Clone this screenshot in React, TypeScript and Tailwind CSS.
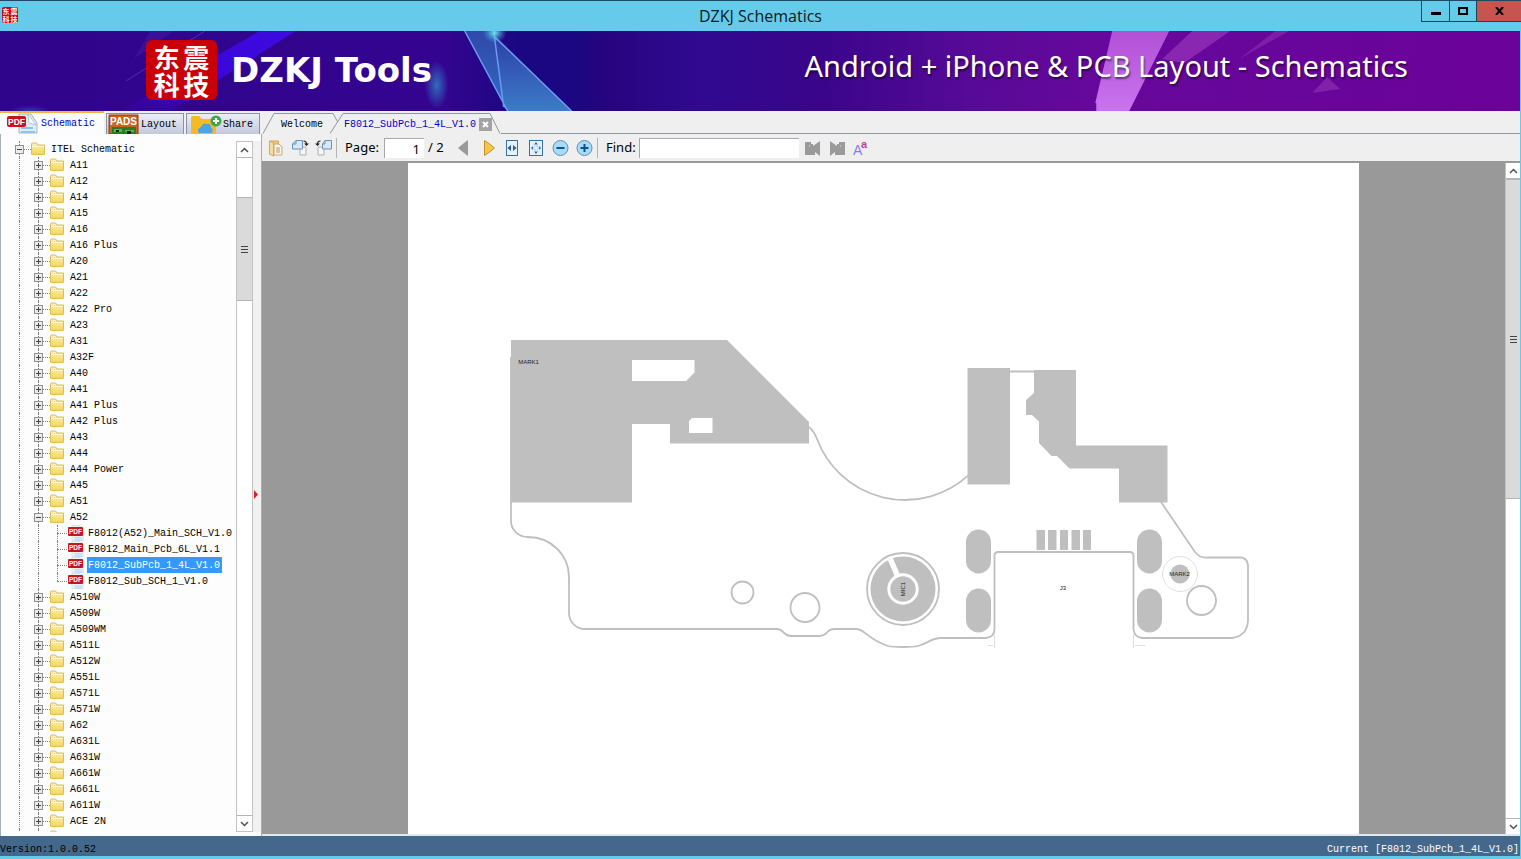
import { ReactNode } from "react";

type NodeItem = {
    label: string;
    level: 0 | 1 | 2;
    open?: boolean;
    last?: boolean;
    selected?: boolean;
};

const before = [
    "A11", "A12", "A14", "A15", "A16", "A16 Plus", "A20", "A21", "A22", "A22 Pro", "A23", "A31",
    "A32F", "A40", "A41", "A41 Plus", "A42 Plus", "A43", "A44", "A44 Power", "A45", "A51",
];

const after = [
    "A510W", "A509W", "A509WM", "A511L", "A512W", "A551L", "A571L", "A571W", "A62", "A631L",
    "A631W", "A661W", "A661L", "A611W", "ACE 2N", "",
];

const nodes: NodeItem[] = [
    { label: "ITEL Schematic", level: 0, open: true },
    ...before.map((label) => ({ label, level: 1 as const })),
    { label: "A52", level: 1, open: true },
    { label: "F8012(A52)_Main_SCH_V1.0", level: 2 },
    { label: "F8012_Main_Pcb_6L_V1.1", level: 2 },
    { label: "F8012_SubPcb_1_4L_V1.0", level: 2, selected: true },
    { label: "F8012_Sub_SCH_1_V1.0", level: 2, last: true },
    ...after.map((label) => ({ label, level: 1 as const })),
];

const mono = "font-['Liberation_Mono',monospace] text-[10px]";

const FolderIcon = () => (
    <svg width="16" height="14" viewBox="0 0 16 14" className="shrink-0">
        <defs>
            <linearGradient id="folder" x1="0" y1="0" x2="0" y2="1">
                <stop offset="0" stopColor="#fff3b4" />
                <stop offset="1" stopColor="#f3d267" />
            </linearGradient>
        </defs>
        <path d="M1.5 12V2q0-1 1-1h4L8 3h6.500v9q0 .5-.5.5H2q-.5 0-.5-.5z" fill="url(#folder)" stroke="#e0bd55" />
        <path d="M2 4.500h12" stroke="#fff8d0" />
    </svg>
);

const PdfIcon = () => (
    <svg width="16" height="16" viewBox="0 0 16 16" className="shrink-0">
        <path d="M4 .5h8l3 3V16H4z" fill="#eef6fb" stroke="#b9d3e2" strokeWidth=".6" />
        <path d="M6 13h8M7 15h7" stroke="#a8d0ea" />
        <rect x="0" y="2" width="15" height="9" rx="1" fill="#c4161c" />
        <text x="7.500" y="9" fontSize="6.500" fontWeight="700" textAnchor="middle" fill="#fff" fontFamily="Liberation Sans">PDF</text>
    </svg>
);

const Expander = ({ open, label }: { open?: boolean; label: string }) => (
    <button aria-label={label} className="relative block size-[9px] border border-[#919191] bg-[#ececec]">
        <svg width="7" height="7" viewBox="0 0 7 7" stroke="#444" className="block">
            <path d={open ? "M1 3.500h5" : "M1 3.500h5M3.500 1v5"} />
        </svg>
    </button>
);

const Guide = ({ half, across, children }: { half?: boolean; across?: boolean; children?: ReactNode }) => (
    <span className="relative flex h-4 w-[19px] shrink-0 items-center justify-center">
        <span className={`absolute left-[9px] top-0 border-l border-dotted border-[#808080] ${half ? "h-2" : "h-4"}`} />
        {across && <span className="absolute left-[9px] top-2 w-3 border-t border-dotted border-[#808080]" />}
        {children}
    </span>
);

const TreeRow = ({ item }: { item: NodeItem }) => (
    <li className="flex h-4 items-center">
        <Guide across={item.level === 0}>
            {item.level === 0 && <Expander open={item.open} label={item.label} />}
        </Guide>
        {item.level > 0 && (
            <Guide across={item.level === 1}>
                {item.level === 1 && <Expander open={item.open} label={item.label || "More"} />}
            </Guide>
        )}
        {item.level === 2 && <Guide across half={item.last} />}
        <span className="flex w-5 shrink-0 pl-px">{item.level === 2 ? <PdfIcon /> : <FolderIcon />}</span>
        <span
            className={`h-4 whitespace-nowrap border border-dotted leading-4 ${item.level === 2 ? "pr-px" : "pl-px"} ${
                item.selected ? "border-[#c87a20] bg-[#3399ff] text-white" : "border-transparent"
            }`}
        >
            {item.label}
        </span>
    </li>
);

const ScrollBar = ({ before, thumb, className }: { before: string; thumb: string; className: string }) => (
    <div className={`flex shrink-0 flex-col border-[#c3c3c3] bg-white ${className}`}>
        <button aria-label="Scroll up" className="flex h-4 shrink-0 items-center justify-center border-b border-[#b5b5b5]">
            <svg width="9" height="6" viewBox="0 0 9 6" fill="none" stroke="#505050" strokeWidth="1.500"><path d="M1 5l3.500-3.500L8 5" /></svg>
        </button>
        <div className={before} />
        <div className={`flex shrink-0 flex-col items-center justify-center gap-0.5 border-y border-[#b5b5b5] bg-[#dadada] ${thumb}`}>
            <span className="h-px w-[7px] bg-[#444]" />
            <span className="h-px w-[7px] bg-[#444]" />
            <span className="h-px w-[7px] bg-[#444]" />
        </div>
        <div className="flex-1" />
        <button aria-label="Scroll down" className="flex h-4 shrink-0 items-center justify-center border-t border-[#b5b5b5]">
            <svg width="9" height="6" viewBox="0 0 9 6" fill="none" stroke="#505050" strokeWidth="1.500"><path d="M1 1l3.500 3.500L8 1" /></svg>
        </button>
    </div>
);

const TitleBar = () => (
    <header className="relative flex h-[31px] shrink-0 items-center justify-center border-t border-[#1d4a63] bg-[#66cbea] pb-px">
        <span className="absolute left-0.5 top-1.5 grid size-4 grid-cols-2 place-items-center rounded-xs bg-[#c8000a] font-['Noto_Sans_CJK_SC',sans-serif] text-[7px] font-bold leading-[7px] text-white">
            <i className="not-italic">东</i><i className="not-italic">震</i><i className="not-italic">科</i><i className="not-italic">技</i>
        </span>
        <h1 className="font-['Open_Sans',sans-serif] text-base leading-5 text-[#0a1a22]">DZKJ Schematics</h1>
        <div className="absolute right-0 top-0 flex h-[21px] border-b border-l border-[#1f4252]">
            <button aria-label="Minimize" className="flex w-7 items-center justify-center border-r border-[#1f4252]">
                <svg width="10" height="10"><path d="M0 6h10v3H0z" /></svg>
            </button>
            <button aria-label="Maximize" className="flex w-[27px] items-center justify-center border-r border-[#1f4252]">
                <svg width="10" height="8"><path d="M1 1h8v6H1z" fill="none" stroke="#000" strokeWidth="2" /></svg>
            </button>
            <button aria-label="Close" className="flex w-11 items-center justify-center bg-[#c5554e]">
                <svg width="9" height="8" viewBox="0 0 9 8" stroke="#000" strokeWidth="2"><path d="M1 0l7 8M8 0L1 8" /></svg>
            </button>
        </div>
    </header>
);

const BannerArt = () => (
    <svg className="absolute inset-0 size-full" viewBox="0 0 1521 80" preserveAspectRatio="none">
        <defs>
            <linearGradient id="base">
                <stop offset="0" stopColor="#2f058b" />
                <stop offset=".29" stopColor="#340490" />
                <stop offset=".34" stopColor="#1c0782" />
                <stop offset=".38" stopColor="#1c0782" />
                <stop offset=".4" stopColor="#28047f" />
                <stop offset=".46" stopColor="#300990" />
                <stop offset=".54" stopColor="#3a058a" />
                <stop offset=".64" stopColor="#570a97" />
                <stop offset=".72" stopColor="#66089b" />
                <stop offset="1" stopColor="#6b0299" />
            </linearGradient>
            <linearGradient id="beam" x1="1" y1="0" x2="0" y2="1">
                <stop offset="0" stopColor="#3f0ae0" />
                <stop offset=".5" stopColor="#3b06d8" />
                <stop offset="1" stopColor="#3a04b0" stopOpacity=".3" />
            </linearGradient>
            <linearGradient id="shard" x1="0" y1="0" x2="0" y2="1">
                <stop offset="0" stopColor="#3358b4" />
                <stop offset="1" stopColor="#3684cf" />
            </linearGradient>
            <linearGradient id="facet" x1="0" y1="0" x2="0" y2="1">
                <stop offset="0" stopColor="#2c3ca6" />
                <stop offset="1" stopColor="#3c7cc8" />
            </linearGradient>
            <linearGradient id="pink" x1="0" y1="0" x2="0" y2="1">
                <stop offset="0" stopColor="#b350d6" />
                <stop offset="1" stopColor="#c874f0" />
            </linearGradient>
            <radialGradient id="glow">
                <stop offset="0" stopColor="#2f86c8" stopOpacity=".8" />
                <stop offset="1" stopColor="#2f86c8" stopOpacity="0" />
            </radialGradient>
            <radialGradient id="spark">
                <stop offset="0" stopColor="#6ee6f0" />
                <stop offset="1" stopColor="#3aa0d0" stopOpacity="0" />
            </radialGradient>
        </defs>
        <path fill="url(#base)" d="M0 0h1521v80H0z" />
        <path fill="url(#beam)" d="M260 0h36L170 80h-50z" />
        <path d="M205 0L126 50" stroke="#5a4bc8" opacity=".6" />
        <path d="M150 0h24L134 28z" fill="#4b1ea8" opacity=".4" />
        <ellipse cx="30" cy="80" rx="20" ry="6" fill="url(#glow)" opacity=".5" />
        <ellipse cx="437" cy="54" rx="12" ry="24" fill="url(#glow)" />
        <path d="M465 0h29l10 70 4 10z" fill="url(#shard)" opacity=".8" />
        <path d="M494 3l10 73 4 4h64z" fill="url(#facet)" />
        <path d="M465 0l43 80M494 0l10 76M495 6l77 74" stroke="#6a9bf0" strokeWidth="1.500" fill="none" />
        <ellipse cx="495" cy="2" rx="12" ry="10" fill="url(#spark)" />
        <path d="M1113 0h57l-40 80h-33v-8h-1z" fill="url(#pink)" />
        <path d="M1193 0h38l-46 32-22-4z" fill="#9430b8" opacity=".8" />
        <path d="M1276 0h14l-50 28z" fill="#862aae" opacity=".7" />
        <path d="M1328 46l13 12-28 4z" fill="#9440b8" opacity=".5" />
    </svg>
);

const Banner = () => (
    <div className="relative flex h-20 shrink-0 items-center justify-between overflow-hidden pb-0.5 pl-[146px] pr-28 text-white">
        <BannerArt />
        <div className="relative flex items-center gap-3.5">
            <div className="grid h-[60px] w-[71px] grid-cols-2 place-items-center rounded-md bg-[#c90008] px-1.5 py-[3px] font-['Noto_Sans_CJK_SC',sans-serif] text-[26px] font-bold leading-[27px]">
                <span>东</span><span>震</span><span>科</span><span>技</span>
            </div>
            <span className="font-['DejaVu_Sans',sans-serif] text-[34px] font-bold leading-10">DZKJ Tools</span>
        </div>
        <span className="relative pb-2 font-['Noto_Sans',sans-serif] text-[29px] leading-10 [text-shadow:1px_2px_2px_#0008]">
            Android + iPhone &amp; PCB Layout - Schematics
        </span>
    </div>
);

const sideTab = "flex h-[21px] items-center overflow-hidden border border-b-0 border-[#8a93a5] bg-linear-to-b from-[#eceef6] to-[#c3c8dd]";

const SideTabs = () => (
    <div role="tablist" className={`flex items-end gap-0.5 ${mono}`}>
        <button role="tab" aria-selected="true" className="flex h-[23px] w-[104px] items-center border-t-2 border-[#f5b142] bg-[#fcfcfe] pl-1.5 text-[#0000c8]">
            <svg width="34" height="21" viewBox="0 0 34 21" className="mr-px shrink-0">
                <path d="M13 20V1h12l6 9v10z" fill="#dcecf8" stroke="#a6b4bf" />
                <path d="M22 1l8 11-7-2z" fill="#fff" stroke="#a6b4bf" strokeWidth=".7" />
                <path d="M15 15h12M15 19h14" stroke="#8fc4ea" strokeWidth="2" />
                <rect x="1" y="3" width="19" height="11" rx="2" fill="#c4151c" />
                <text x="10.500" y="12" fontSize="8.500" fontWeight="700" textAnchor="middle" fill="#fff" fontFamily="Liberation Sans">PDF</text>
            </svg>
            Schematic
        </button>
        <button role="tab" aria-selected="false" className={`${sideTab} w-[78px]`}>
            <svg width="34" height="20" viewBox="0 0 34 20" className="shrink-0">
                <path d="M2 1h29v19H2z" fill="#c8641e" stroke="#8a3c10" />
                <path d="M5 13h24v7H5z" fill="#2c7a28" />
                <path d="M7 15h8v3H7zM18 16h9v2h-9z" fill="#52b848" />
                <path d="M9 16h3v2H9zM20 17h4v3h-4z" fill="#222" />
                <text x="16.500" y="11" fontSize="10" fontWeight="700" textAnchor="middle" fill="#fff" fontFamily="Liberation Sans">PADS</text>
            </svg>
            Layout
        </button>
        <button role="tab" aria-selected="false" className={`${sideTab} w-[74px] pl-[3px]`}>
            <svg width="33" height="20" viewBox="0 0 33 20" className="shrink-0">
                <path d="M1 20V4q0-2 2-2h6l3 3h12q2 0 2 2v13z" fill="#f5bb24" />
                <path d="M9 19q-3-4 2-6 2-5 6-3 4-1 4 4 3 1 1 5z" fill="#4ba4ea" />
                <circle cx="26" cy="7" r="5.500" fill="#42a845" />
                <path d="M26 4v6M23 7h6" stroke="#fff" strokeWidth="2" />
            </svg>
            Share
        </button>
    </div>
);

const SidePanel = () => (
    <aside className="flex w-[262px] shrink-0 flex-col">
        <SideTabs />
        <div className={`flex min-h-0 flex-1 border-x border-[#a3b1b8] bg-[#fdfdfd] pb-1 pt-[7px] ${mono}`}>
            <ul className="min-w-0 flex-1 overflow-hidden pl-[9px]">
                {nodes.map((item, i) => (
                    <TreeRow key={i} item={item} />
                ))}
            </ul>
            <ScrollBar before="h-[39px] shrink-0" thumb="h-[104px]" className="w-[17px] border" />
            <div className="flex w-2 items-center bg-[#f1f1f4] pt-4">
                <svg width="6" height="9" viewBox="0 0 6 9"><path d="M1 0l4 4.500L1 9z" fill="#d8232a" /></svg>
            </div>
        </div>
    </aside>
);

const DocTabs = () => (
    <div role="tablist" className={`flex h-[23px] shrink-0 items-end ${mono}`}>
        <button role="tab" aria-selected="false" className="relative flex h-[21px] w-[68px] shrink-0 items-center pl-[19px]">
            <svg width="76" height="21" className="absolute left-0 top-0" fill="none" stroke="#8b999d">
                <path d="M1 20.500L12 .5h59l5 9" />
            </svg>
            <span className="relative pt-px">Welcome</span>
        </button>
        <div className="relative flex h-[21px] w-[171px] shrink-0 items-center gap-[3px] pl-3.5 pt-px text-[#0000c8]">
            <svg width="171" height="21" className="absolute left-0 top-0" fill="none" stroke="#8b999d">
                <path d="M0 20.500L13 .5h147l10 20" />
            </svg>
            <button role="tab" aria-selected="true" className="relative">F8012_SubPcb_1_4L_V1.0</button>
            <button aria-label="Close tab" className="relative flex size-[13px] items-center justify-center bg-[#a3a3a3]">
                <svg width="7" height="7" stroke="#fff" strokeWidth="2"><path d="M1 1l5 5M6 1L1 6" /></svg>
            </button>
        </div>
        <div className="h-full flex-1 border-b border-[#8b999d]" />
    </div>
);

const Tool = ({ label, children }: { label: string; children: ReactNode }) => (
    <button aria-label={label} title={label} className="flex w-6 shrink-0 items-center justify-center">
        <svg width="18" height="18" viewBox="0 0 18 18" fill="none">{children}</svg>
    </button>
);

const Toolbar = () => (
    <div className="flex h-[29px] shrink-0 items-center border-b-2 border-[#999] pl-0.5 pt-px font-['Noto_Sans',sans-serif] text-[13px] text-black">
        <Tool label="Open">
            <path d="M2.500 2h9v13h-9z" fill="#f0c878" stroke="#d5a75a" />
            <path d="M2.500 2l4 2v13l-4-2z" fill="#f7dc9c" stroke="#d5a75a" />
            <path d="M7 5h5l3 3v8H7z" fill="#fdf4e4" stroke="#c8a878" />
            <path d="M9 9h4M9 11h4M9 13h4" stroke="#b0977a" />
        </Tool>
        <Tool label="Rotate right">
            <path d="M9 8h6v8H9z" fill="#f6f6f6" stroke="#b0b0b0" />
            <path d="M5 1.500h6.500v8.500H1.500V5z" fill="#d5e9fa" stroke="#6a8fb8" />
            <path d="M1.500 5H5V1.500" stroke="#6a8fb8" />
            <path d="M12.500 2q3 0 3 3" stroke="#222" strokeWidth="1.200" />
            <path d="M13 4.500h5L15.500 7z" fill="#222" />
        </Tool>
        <Tool label="Rotate left">
            <path d="M3 8h6v8H3z" fill="#f6f6f6" stroke="#b0b0b0" />
            <path d="M10 1.500h6.500V10h-9V5z" fill="#d5e9fa" stroke="#6a8fb8" />
            <path d="M7.500 5H10V1.500" stroke="#6a8fb8" />
            <path d="M5.500 2q-3 0-3 3" stroke="#222" strokeWidth="1.200" />
            <path d="M0 4.500h5L2.500 7z" fill="#222" />
        </Tool>
        <span className="h-5 w-px bg-[#b4b4b4]" />
        <label htmlFor="page" className="ml-2 w-[39px]">Page:</label>
        <input id="page" defaultValue="1" className="h-5 w-10 border-l border-t border-[#a8a8a8] bg-white pr-1 text-right" />
        <span className="ml-1 w-[19px] whitespace-nowrap">/ 2</span>
        <span className="w-1" />
        <Tool label="Previous page">
            <path d="M14 1v16q-3-2-10-8 7-6 10-8z" fill="#9a9a9a" />
        </Tool>
        <span className="w-0.5" />
        <Tool label="Next page">
            <path d="M4.500 1.500v15q5-3 10-7.500-5-4.500-10-7.500z" fill="#f3c74a" stroke="#c79024" />
        </Tool>
        <Tool label="Fit width">
            <rect x="2.500" y="1.500" width="11" height="15" fill="#e3f2fe" stroke="#3b6ea5" />
            <path d="M7 6v6L3.500 9zM9 6v6l3.500-3z" fill="#235e9b" />
        </Tool>
        <Tool label="Fit page">
            <rect x="1.500" y="1.500" width="13" height="15" fill="#e3f2fe" stroke="#3b6ea5" />
            <path d="M6 5.500L8 3l2 2.500zM6 12.500L8 15l2-2.500zM5 7L3 9l2 2zM11 7l2 2-2 2z" fill="#3b6ea5" />
            <path d="M6 7h4v4H6z" stroke="#9fc0de" strokeDasharray="1 1" />
        </Tool>
        <Tool label="Zoom out">
            <circle cx="8.500" cy="9" r="7.500" fill="#a5dcfb" stroke="#6a8cad" />
            <path d="M4.500 9h8" stroke="#174f8a" strokeWidth="2" />
        </Tool>
        <Tool label="Zoom in">
            <circle cx="8.500" cy="9" r="7.500" fill="#a5dcfb" stroke="#6a8cad" />
            <path d="M4.500 9h8M8.500 5v8" stroke="#174f8a" strokeWidth="2" />
        </Tool>
        <span className="h-5 w-px bg-[#b4b4b4]" />
        <label htmlFor="find" className="ml-2 w-[33px]">Find:</label>
        <input id="find" className="h-5 w-40 border-l border-t border-[#a8a8a8] bg-white px-1" />
        <span className="w-0.5" />
        <Tool label="Find previous">
            <path d="M1 3h6v2h2v2l7-5v15l-5-4v3H1z" fill="#9a9a9a" />
            <path d="M5 6h1v2H5z" fill="#c4c4c4" />
        </Tool>
        <Tool label="Find next">
            <path d="M17 3h-6v2H9v2L2 2v15l5-4v3h10z" fill="#9a9a9a" />
            <path d="M12 6h1v2h-1z" fill="#c4c4c4" />
        </Tool>
        <Tool label="Match case">
            <text x="1" y="16" fontSize="14" fill="#8a7af0" fontFamily="Liberation Sans">A</text>
            <text x="9" y="9" fontSize="11" fontWeight="700" fill="#c040a0" fontFamily="Liberation Sans">a</text>
        </Tool>
    </div>
);

const Board = () => (
    <svg viewBox="408 163 951 671" className="block w-full" fill="none" stroke="#bfbfbf" strokeWidth="1.800">
        <g fill="#bfbfbf" stroke="none">
            <path fillRule="evenodd" d="M511 340H727L809 422V443.500H670V424H632V502.500H511ZM632 360V381H686L694.500 372.500V360ZM689 421V433H712.500V418H692Z" />
            <path d="M967.500 368h42.500v116.500h-42.500z" />
            <path d="M1034 370H1076V445.500H1167.500V502.500H1119V468.500H1069.500L1057 456H1051.500L1039 443V421.500L1032 415H1026V400L1034 393Z" />
            <rect x="966" y="529.500" width="25" height="44" rx="12.500" />
            <rect x="966" y="588.500" width="25" height="44" rx="12.500" />
            <rect x="1137" y="529.500" width="25" height="44" rx="12.500" />
            <rect x="1137" y="588.500" width="25" height="44" rx="12.500" />
            <path d="M1036.500 530h8.500v20h-8.500zM1048 530h8.500v20h-8.500zM1060 530h8v20h-8zM1071.500 530h8.500v20h-8.500zM1083 530h8v20h-8z" />
            <circle cx="903" cy="589" r="32.500" />
            <circle cx="1180" cy="574" r="9.500" />
        </g>
        <path d="M511 357V521a17 16 0 0 0 17 16C551 537 569 555 569 577V613a16 16 0 0 0 16 16H777C784 629 783 636 791 636H820C828 636 826 629 834 629H856C865 629 867 639 888 646Q892 647 903 647Q914 647 918 646C929 643 931 638 941 638H986Q994.500 637 994.500 629V556Q994.500 552 998 552H1130Q1133.500 552 1133.500 556V629Q1134 637 1142 638H1232Q1247 636 1248 621V565Q1247 558 1241 557.500H1206Q1200 558 1195 552L1161 502" />
        <path d="M809 427Q814 431 817 439A94 94 0 0 0 968 475.700M1010 371.500H1034" />
        <circle cx="742.500" cy="592.500" r="11" />
        <circle cx="805" cy="607.500" r="14.500" />
        <circle cx="1201.500" cy="600.500" r="14.500" />
        <circle cx="903" cy="589" r="36" />
        <g stroke="#fff">
            <circle cx="903" cy="589" r="14.200" strokeWidth="3" />
            <path d="M889.500 557L898 577" strokeWidth="5.500" />
        </g>
        <circle cx="1180" cy="574" r="17.500" strokeWidth=".5" />
        <path d="M994.500 634v14M1133.500 634v14M988 645.500h5M1135 645.500h10" strokeWidth=".5" />
        <g fill="#222" stroke="none" fontSize="6" fontFamily="Liberation Sans" textAnchor="middle">
            <text x="528.500" y="364">MARK1</text>
            <text x="1179.500" y="576">MARK2</text>
            <text x="1063" y="590">J3</text>
            <text x="903" y="591" transform="rotate(-90 903 589)">MIC1</text>
        </g>
    </svg>
);

const Viewer = () => (
    <main className="flex min-w-0 flex-1 flex-col bg-[#efefef]">
        <DocTabs />
        <Toolbar />
        <div className="flex min-h-0 flex-1 border-b-2 border-[#dfe9ef]">
            <div className="flex min-w-0 flex-1 justify-center overflow-hidden bg-[#999]">
                <div className="w-[951px] max-w-full bg-white">
                    <Board />
                </div>
            </div>
            <ScrollBar before="" thumb="h-80" className="w-[15px] border-l" />
        </div>
    </main>
);

const App = () => {
    return (
        <div className="flex h-screen flex-col overflow-hidden bg-[#efefef] text-black">
            <TitleBar />
            <div className="flex min-h-0 flex-1 flex-col border-r border-[#66cbea]">
                <Banner />
                <div className="flex min-h-0 flex-1">
                    <SidePanel />
                    <Viewer />
                </div>
                <footer className={`flex h-[23px] shrink-0 items-end justify-between border-b-[3px] border-[#66cbea] bg-[#44678c] pr-px leading-3 ${mono}`}>
                    <span>Version:1.0.0.52</span>
                    <span className="text-white">Current [F8012_SubPcb_1_4L_V1.0]</span>
                </footer>
            </div>
        </div>
    );
};

export default App;
